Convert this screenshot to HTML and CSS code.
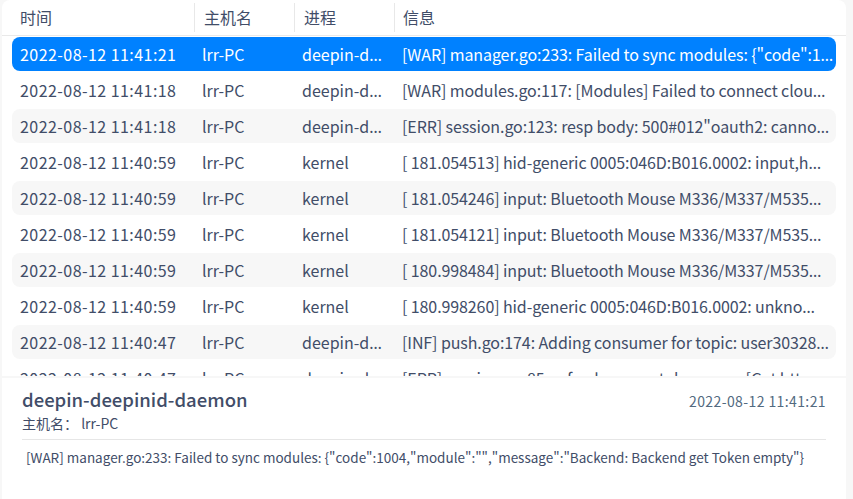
FILE: index.html
```html
<!DOCTYPE html>
<html lang="zh-CN">
<head>
<meta charset="utf-8">
<title>日志</title>
<link rel="stylesheet" href="styles.css">
</head>
<body>
<div class="app">
  <section class="list-panel">
    <div class="thead">
      <div class="th c-time">时间</div>
      <div class="th c-host">主机名</div>
      <div class="th c-proc">进程</div>
      <div class="th c-msg">信息</div>
    </div>
    <div class="rows">
      <div class="row selected"><div class="c-time">2022-08-12 11:41:21</div><div class="c-host">lrr-PC</div><div class="c-proc">deepin-d<span class="ell">…</span></div><div class="c-msg">[WAR] manager.go:233: Failed to sync modules: {"code":1<span class="ell">…</span></div></div>
      <div class="row"><div class="c-time">2022-08-12 11:41:18</div><div class="c-host">lrr-PC</div><div class="c-proc">deepin-d<span class="ell">…</span></div><div class="c-msg">[WAR] modules.go:117: [Modules] Failed to connect clou<span class="ell">…</span></div></div>
      <div class="row alt"><div class="c-time">2022-08-12 11:41:18</div><div class="c-host">lrr-PC</div><div class="c-proc">deepin-d<span class="ell">…</span></div><div class="c-msg">[ERR] session.go:123: resp body: 500#012"oauth2: canno<span class="ell">…</span></div></div>
      <div class="row"><div class="c-time">2022-08-12 11:40:59</div><div class="c-host">lrr-PC</div><div class="c-proc">kernel</div><div class="c-msg">[ 181.054513] hid-generic 0005:046D:B016.0002: input,h<span class="ell">…</span></div></div>
      <div class="row alt"><div class="c-time">2022-08-12 11:40:59</div><div class="c-host">lrr-PC</div><div class="c-proc">kernel</div><div class="c-msg">[ 181.054246] input: Bluetooth Mouse M336/M337/M535<span class="ell">…</span></div></div>
      <div class="row"><div class="c-time">2022-08-12 11:40:59</div><div class="c-host">lrr-PC</div><div class="c-proc">kernel</div><div class="c-msg">[ 181.054121] input: Bluetooth Mouse M336/M337/M535<span class="ell">…</span></div></div>
      <div class="row alt"><div class="c-time">2022-08-12 11:40:59</div><div class="c-host">lrr-PC</div><div class="c-proc">kernel</div><div class="c-msg">[ 180.998484] input: Bluetooth Mouse M336/M337/M535<span class="ell">…</span></div></div>
      <div class="row"><div class="c-time">2022-08-12 11:40:59</div><div class="c-host">lrr-PC</div><div class="c-proc">kernel</div><div class="c-msg">[ 180.998260] hid-generic 0005:046D:B016.0002: unkno<span class="ell">…</span></div></div>
      <div class="row alt"><div class="c-time">2022-08-12 11:40:47</div><div class="c-host">lrr-PC</div><div class="c-proc">deepin-d<span class="ell">…</span></div><div class="c-msg">[INF] push.go:174: Adding consumer for topic: user30328<span class="ell">…</span></div></div>
      <div class="row"><div class="c-time">2022-08-12 11:40:47</div><div class="c-host">lrr-PC</div><div class="c-proc">deepin-d<span class="ell">…</span></div><div class="c-msg">[ERR] session.go:85: refresh access token error:[Get http<span class="ell">…</span></div></div>
    </div>
  </section>
  <section class="detail">
    <div class="detail-head">
      <div class="detail-title">deepin-deepinid-daemon</div>
      <div class="detail-date">2022-08-12 11:41:21</div>
    </div>
    <div class="detail-host">主机名： lrr-PC</div>
    <div class="detail-msg">[WAR] manager.go:233: Failed to sync modules: {"code":1004,"module":"","message":"Backend: Backend get Token empty"}</div>
  </section>
</div>
</body>
</html>
```
FILE: styles.css
```css
* { box-sizing: border-box; }
html, body { margin: 0; padding: 0; }
body {
  background: #f7f7f7;
  font-family: "Noto Sans CJK SC", "Noto Sans", sans-serif;
  color: #414d68;
  width: 853px;
  height: 499px;
  overflow: hidden;
}
.app {
  width: 844px;
  margin-left: 2px;
  height: 499px;
  display: flex;
  flex-direction: column;
  gap: 2px;
}
.list-panel {
  background: #fff;
  border-radius: 8px 8px 0 0;
  height: 376px;
  overflow: hidden;
  flex: none;
}
.thead {
  height: 36px;
  display: flex;
  align-items: center;
  padding-left: 10px;
  border-bottom: 1px solid #e9e9e9;
}
.th {
  font-size: 16px;
  height: 29px;
  line-height: 29px;
  padding-left: 8px;
  color: #414d68;
}
.th + .th { border-left: 1px solid #e8e8e8; }
.th.c-host { padding-left: 9px; }
.th.c-proc { padding-left: 9px; }
.th.c-msg { padding-left: 8px; }
.c-time { width: 182px; flex: none; }
.c-host { width: 100px; flex: none; }
.c-proc { width: 100px; flex: none; }
.c-msg { flex: 1; min-width: 0; }
.rows {
  padding: 1px 10px 0 10px;
  display: flex;
  flex-direction: column;
  gap: 2px;
}
.row {
  height: 34px;
  display: flex;
  align-items: center;
  border-radius: 8px;
  font-size: 16px;
  flex: none;
}
.row > div {
  padding-left: 8px;
  padding-right: 4px;
  white-space: nowrap;
  overflow: hidden;
}
.row > .c-msg { padding-right: 0; letter-spacing: -0.1px; }
.row > .c-time { letter-spacing: 0.45px; }
.ell { font-family: "Noto Sans", sans-serif; letter-spacing: 0; }
.row.alt { background: #f7f7f7; }
.row.selected { background: #0081ff; color: #fff; }
.detail {
  background: #fff;
  flex: 1;
  padding: 8px 20px 0 20px;
}
.detail-head {
  display: flex;
  justify-content: space-between;
  align-items: baseline;
}
.detail-title {
  font-size: 18.5px;
  font-weight: 500;
  color: #414d68;
}
.detail-date {
  font-size: 14px;
  letter-spacing: 0.4px;
  color: #526a7f;
}
.detail-host {
  font-size: 14px;
  color: #414d68;
  margin-top: 1px;
  padding-bottom: 6px;
  border-bottom: 1px solid #e6e6e6;
}
.detail-msg {
  font-size: 13.5px;
  white-space: nowrap;
  padding: 7px 4px 0 4px;
  color: #414d68;
}
```
